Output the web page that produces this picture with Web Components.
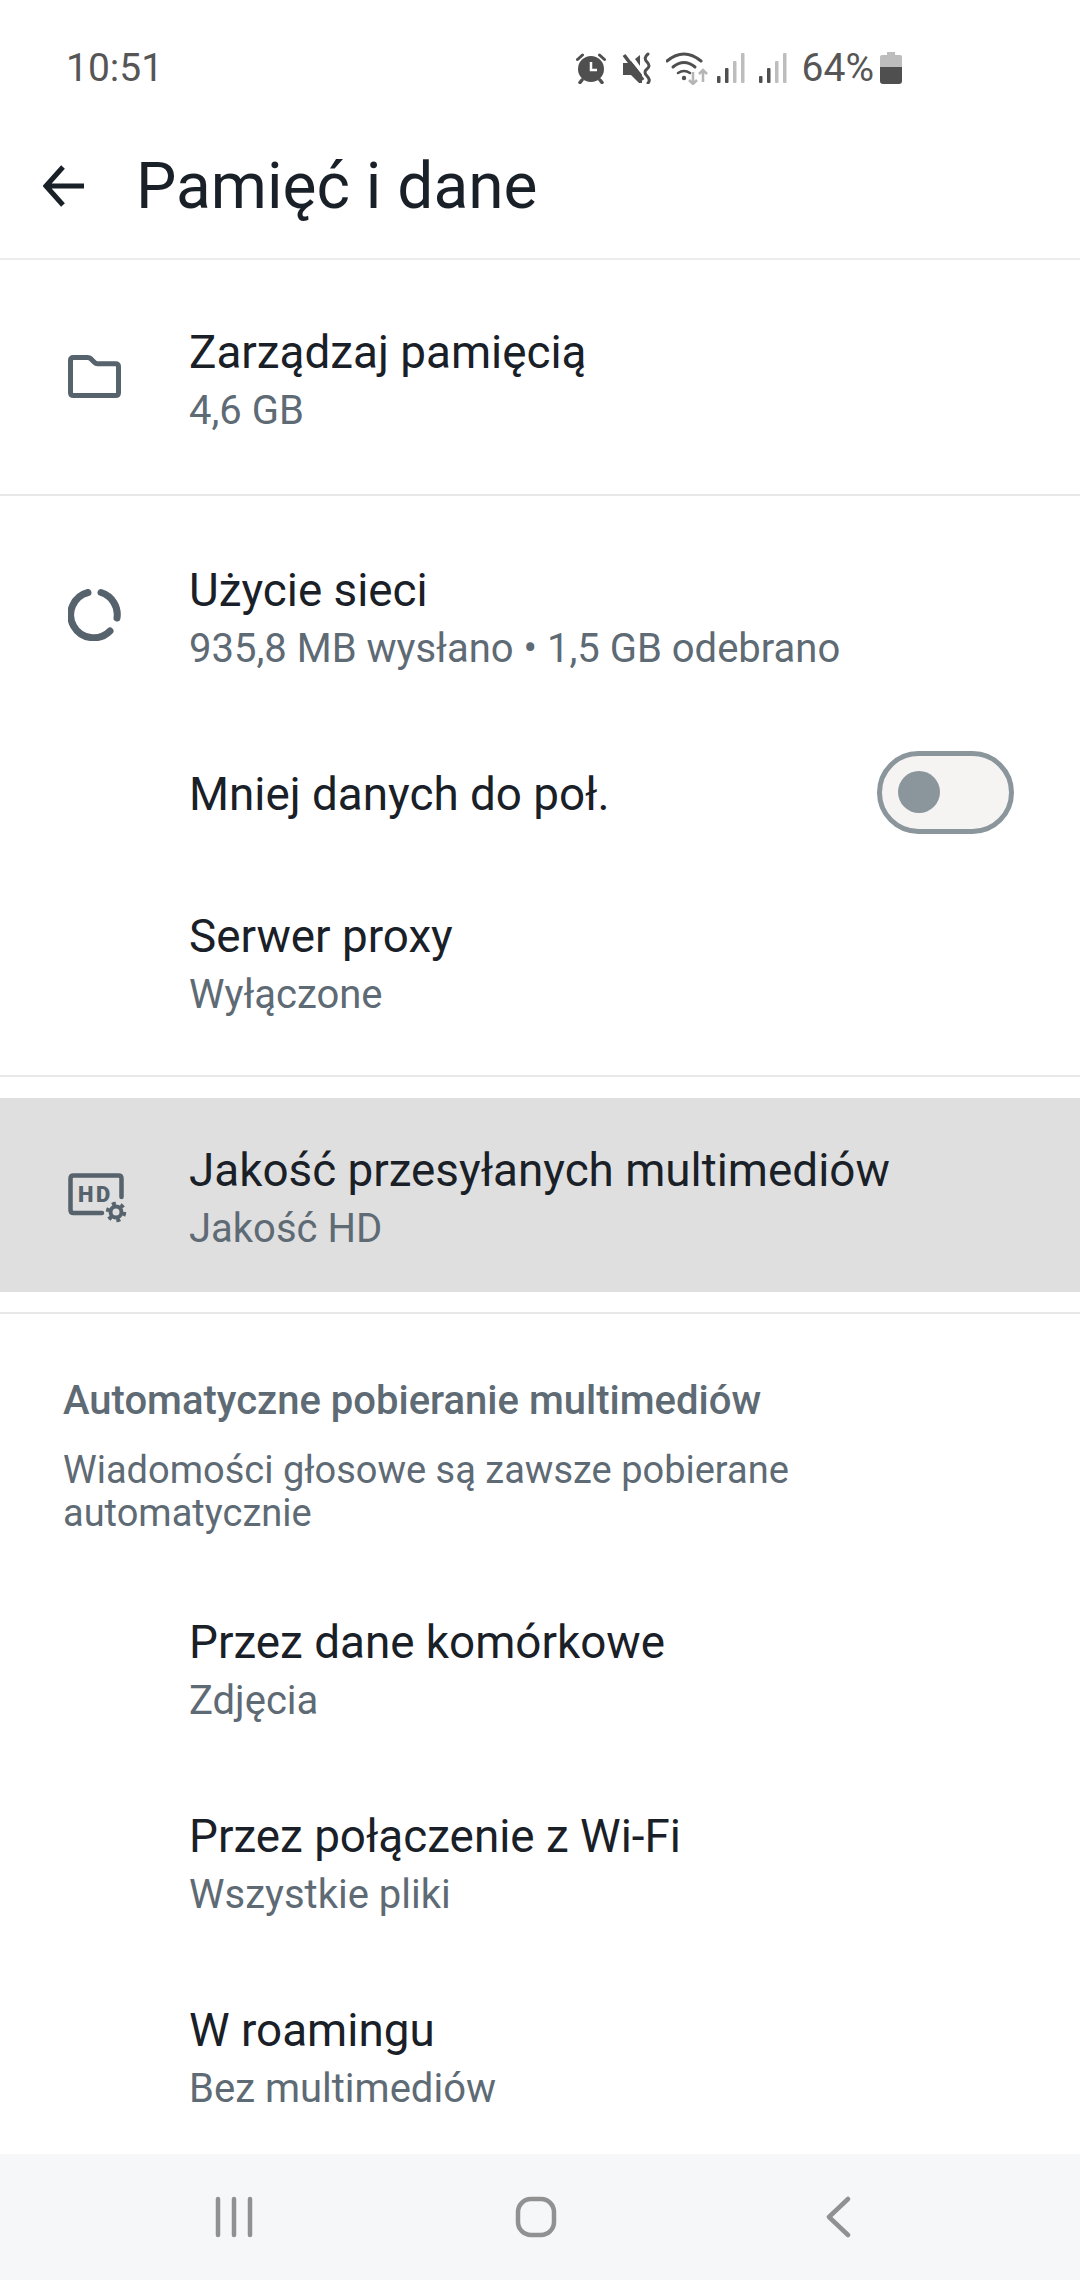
<!DOCTYPE html>
<html lang="pl">
<head>
<meta charset="utf-8">
<title>Pamięć i dane</title>
<style>
  html, body { margin: 0; padding: 0; background: #fff; }
  body { width: 1080px; height: 2280px; overflow: hidden; font-family: Roboto, "Noto Sans", sans-serif; display: flex; flex-direction: column; }
  status-bar, app-header, nav-bar { flex: none; }
  main-list { flex: 1; min-height: 0; }
</style>
</head>
<body>
<status-bar></status-bar>
<app-header>Pamięć i dane</app-header>
<main-list>
  <list-group pad="22 18" divider>
    <settings-row sub="4,6 GB">
      <svg slot="icon" style="margin-bottom:6px" width="53" height="43" viewBox="0 0 53 43" fill="none" stroke="#56626c" stroke-width="5" stroke-linejoin="round"><path d="M5.500 2.500h14q2 0 3.500 1.400l3.600 3.600q1.200 1.200 3 1.200h17.900q3 0 3 3v25.800q0 3-3 3h-42q-3 0-3-3v-32q0-3 3-3z"/></svg>
      Zarządzaj pamięcią
    </settings-row>
  </list-group>
  <list-group pad="24 15" divider>
    <settings-row sub="935,8 MB wysłano • 1,5 GB odebrano">
      <svg slot="icon" style="margin-bottom:6px" width="53" height="53" viewBox="0 0 53 53" fill="none" stroke="#56626c" stroke-width="7" stroke-linecap="round"><path d="M20 4.500A23 23 0 1 0 42 43"/><path d="M33 4.500A23 23 0 0 1 49 30"/></svg>
      Użycie sieci
    </settings-row>
    <settings-row compact>
      Mniej danych do poł.
      <toggle-switch slot="end"></toggle-switch>
    </settings-row>
    <settings-row sub="Wyłączone">Serwer proxy</settings-row>
  </list-group>
  <list-group pad="21 20" divider>
    <settings-row sub="Jakość HD" selected>
      <svg slot="icon" style="margin-top:8px" width="60" height="52" viewBox="0 0 60 52" fill="none" stroke="#56626c" stroke-width="4.500" stroke-linecap="round" stroke-linejoin="round"><path d="M34 40H5.500q-3 0-3-3V5.500q0-3 3-3h45q3 0 3 3V24"/><text x="10" y="29" font-family="Roboto, sans-serif" font-weight="900" font-size="22" letter-spacing="2.500" fill="#56626c" stroke="none">HD</text><circle cx="48" cy="39" r="5.500" stroke-width="4"/><circle cx="48" cy="39" r="8.500" stroke-width="3.500" stroke-dasharray="4 4.900" stroke-linecap="butt"/></svg>
      Jakość przesyłanych multimediów
    </settings-row>
  </list-group>
  <media-head>
    <span slot="head">Automatyczne pobieranie multimediów</span>
    Wiadomości głosowe są zawsze pobierane<br>automatycznie
  </media-head>
  <settings-row sub="Zdjęcia">Przez dane komórkowe</settings-row>
  <settings-row sub="Wszystkie pliki">Przez połączenie z Wi-Fi</settings-row>
  <settings-row sub="Bez multimediów">W roamingu</settings-row>
</main-list>
<nav-bar></nav-bar>

<script>
class StatusBar extends HTMLElement {
    connectedCallback() {
        this.attachShadow({ mode: 'open' });
        this.shadowRoot.innerHTML = `
            <style>
                :host { display: flex; align-items: center; height: 68px; padding: 34px 178px 0 66px; color: #565656; font-size: 39px; font-family: Roboto, sans-serif; }
                .time { flex: 1; }
                .icons { display: flex; align-items: center; }
                svg { display: block; flex: none; }
                .pct { font-size: 39px; margin: 0 6px 0 15px; }
            </style>
            <span class="time">10:51</span>
            <div class="icons">
                <svg width="30" height="32" viewBox="0 0 30 32" style="margin-right:16px"><circle cx="15" cy="17" r="13" fill="#4f4f4f"/><path d="M15 10v8h6" fill="none" stroke="#fff" stroke-width="2.500"/><path d="M1.500 7.500l5-4.500M28.500 7.500l-5-4.500" stroke="#4f4f4f" stroke-width="3" stroke-linecap="round"/><path d="M6 28l-2 2.500M24 28l2 2.500" stroke="#4f4f4f" stroke-width="3.500" stroke-linecap="round"/></svg>
                <svg width="30" height="32" viewBox="0 0 30 32" style="margin-right:14px"><path d="M1 11h5l3-2 11 13v9h-3l-8-8H1z" fill="#4f4f4f"/><path d="M13 7l5-4v11z" fill="#4f4f4f"/><path d="M2 3l19 25" stroke="#4f4f4f" stroke-width="3.500"/><path d="M4.500 1l19 25" stroke="#fff" stroke-width="1.500"/><path d="M26 2q-5 4-1 8t0 7 0 7 1 7" fill="none" stroke="#4f4f4f" stroke-width="3" stroke-linecap="round"/></svg>
                <svg width="42" height="33" viewBox="0 0 42 33" style="margin-right:9px"><path d="M1 9q17-14 34 0" fill="none" stroke="#4f4f4f" stroke-width="3" stroke-linecap="round"/><path d="M7 15q11-9 22 0" fill="none" stroke="#4f4f4f" stroke-width="3" stroke-linecap="round"/><path d="M12 21q6-4 12 0" fill="none" stroke="#4f4f4f" stroke-width="2.500" stroke-linecap="round"/><circle cx="18" cy="26" r="2.200" fill="#4f4f4f"/><path d="M27 20v12m-4-4l4 4 4-4M37 30V18m-4 4l4-4 4 4" fill="none" stroke="#b5b5b5" stroke-width="2.500"/></svg>
                <signal-bars style="margin-right:14px"></signal-bars>
                <signal-bars></signal-bars>
                <span class="pct">64%</span>
                <svg width="22" height="32" viewBox="0 0 22 32"><path d="M7 0h8v3h5q2 0 2 2v12H0V5q0-2 2-2h5z" fill="#bdbdbd"/><path d="M0 15h22v14q0 3-3 3H3q-3 0-3-3z" fill="#4f4f4f"/></svg>
            </div>
        `;
    }
}
customElements.define('status-bar', StatusBar);

class SignalBars extends HTMLElement {
    connectedCallback() {
        this.attachShadow({ mode: 'open' });
        this.shadowRoot.innerHTML = `
            <style>:host { display: block; width: 28px; height: 30px; } svg { display: block; }</style>
            <svg width="28" height="30" viewBox="0 0 28 30">
                <rect x="0" y="23" width="3.500" height="7" rx="1" fill="#4f4f4f"/>
                <rect x="8" y="15" width="3.500" height="15" rx="1" fill="#4f4f4f"/>
                <rect x="16" y="8" width="3.500" height="22" rx="1" fill="#bdbdbd"/>
                <rect x="24" y="0" width="3.500" height="30" rx="1" fill="#bdbdbd"/>
            </svg>
        `;
    }
}
customElements.define('signal-bars', SignalBars);

class AppHeader extends HTMLElement {
    connectedCallback() {
        this.attachShadow({ mode: 'open' });
        this.shadowRoot.innerHTML = `
            <style>
                :host { display: flex; align-items: center; height: 158px; box-sizing: border-box; padding: 12px 0 0 43px; border-bottom: 2px solid #ececec; color: #1a2027; font-size: 64px; font-family: Roboto, sans-serif; }
                svg { display: block; margin-right: 52px; }
            </style>
            <svg width="41" height="42" viewBox="0 0 41 42" fill="none" stroke="#1a2027" stroke-width="5"><path d="M20 2L3 21l17 19M3 21h38"/></svg>
            <slot></slot>
        `;
    }
}
customElements.define('app-header', AppHeader);

class ListGroup extends HTMLElement {
    connectedCallback() {
        const [top, bottom] = (this.getAttribute('pad') || '0 0').split(' ');
        this.attachShadow({ mode: 'open' });
        this.shadowRoot.innerHTML = `
            <style>
                :host { display: block; padding: ${top}px 0 ${bottom}px; }
                :host([divider]) { border-bottom: 2px solid #e8e8e8; }
            </style>
            <slot></slot>
        `;
    }
}
customElements.define('list-group', ListGroup);

class SettingsRow extends HTMLElement {
    connectedCallback() {
        const sub = this.getAttribute('sub');
        this.attachShadow({ mode: 'open' });
        this.shadowRoot.innerHTML = `
            <style>
                :host { display: flex; align-items: center; height: 194px; padding: 0 66px 0 68px; color: #1a2027; font-family: Roboto, sans-serif; }
                :host([compact]) { height: 152px; }
                :host([selected]) { background: #dfdfdf; }
                .icon { width: 121px; flex: none; display: flex; align-items: center; }
                .text { flex: 1; display: flex; flex-direction: column; padding-top: 6px; }
                :host([compact]) .text, :host([selected]) .text { padding-top: 10px; }
                .title { font-size: 45.800px; line-height: 58px; white-space: nowrap; }
                .sub { font-size: 40px; line-height: 58px; color: #5e6a74; white-space: nowrap; }
            </style>
            <div class="icon"><slot name="icon"></slot></div>
            <div class="text">
                <div class="title"><slot></slot></div>
                ${sub ? `<div class="sub">${sub}</div>` : ''}
            </div>
            <slot name="end"></slot>
        `;
    }
}
customElements.define('settings-row', SettingsRow);

class ToggleSwitch extends HTMLElement {
    connectedCallback() {
        this.attachShadow({ mode: 'open' });
        this.shadowRoot.innerHTML = `
            <style>
                :host { display: flex; align-items: center; box-sizing: border-box; width: 137px; height: 83px; margin-top: 4px; border: 5px solid #8a959c; border-radius: 42px; background: #f6f4f2; padding-left: 16px; }
                i { display: block; width: 42px; height: 42px; border-radius: 50%; background: #8a959c; }
            </style>
            <i></i>
        `;
    }
}
customElements.define('toggle-switch', ToggleSwitch);

class MediaHead extends HTMLElement {
    connectedCallback() {
        this.attachShadow({ mode: 'open' });
        this.shadowRoot.innerHTML = `
            <style>
                :host { display: block; height: 258px; box-sizing: border-box; padding: 62px 63px 0; color: #5e6a74; font-family: Roboto, sans-serif; }
                .head { font-size: 40px; font-weight: 500; line-height: 50px; margin-bottom: 23px; white-space: nowrap; }
                .desc { font-size: 38px; line-height: 43px; white-space: nowrap; }
            </style>
            <div class="head"><slot name="head"></slot></div>
            <div class="desc"><slot></slot></div>
        `;
    }
}
customElements.define('media-head', MediaHead);

class NavBar extends HTMLElement {
    connectedCallback() {
        this.attachShadow({ mode: 'open' });
        this.shadowRoot.innerHTML = `
            <style>
                :host { display: grid; grid-template-columns: repeat(3, 302px); align-items: center; justify-items: center; height: 126px; padding: 0 0 0 83px; background: #f6f7f9; }
                svg { display: block; }
            </style>
            <svg width="38" height="42" viewBox="0 0 38 42" fill="none" stroke="#919191" stroke-width="4.500" stroke-linecap="round"><path d="M3 3v36M19 3v36M35 3v36"/></svg>
            <svg width="42" height="42" viewBox="0 0 42 42"><rect x="3" y="3" width="36" height="36" rx="13" fill="none" stroke="#919191" stroke-width="4.500"/></svg>
            <svg width="26" height="42" viewBox="0 0 26 42" fill="none" stroke="#919191" stroke-width="4.500" stroke-linecap="round" stroke-linejoin="round"><path d="M23 3L4 21l19 18"/></svg>
        `;
    }
}
customElements.define('nav-bar', NavBar);
</script>
</body>
</html>
